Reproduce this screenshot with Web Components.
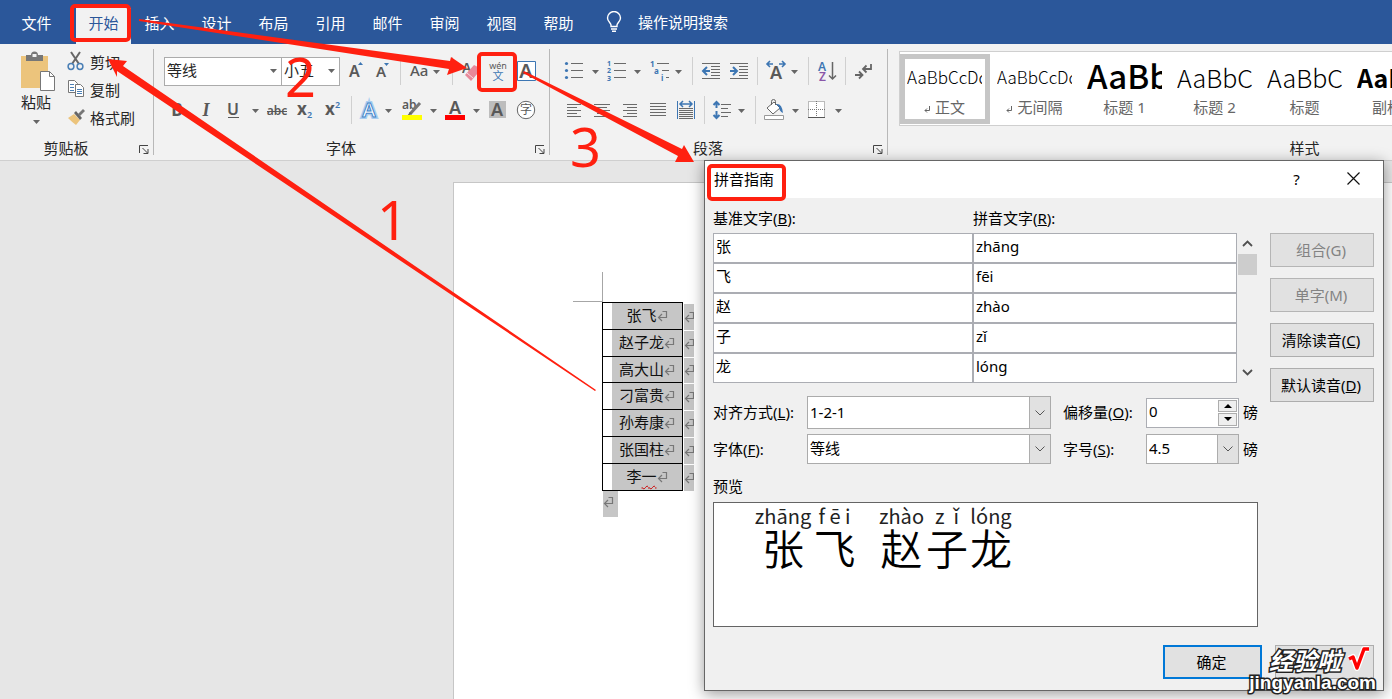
<!DOCTYPE html>
<html lang="zh-CN">
<head>
<meta charset="utf-8">
<title>拼音指南</title>
<style>
html, body { margin: 0; height: 100%; }
body { overflow: hidden; font-family: "Noto Sans", "Noto Sans CJK SC", sans-serif; font-size: 15px; color: #262626; }
</style>
</head>
<body>
<word-app>
  <menu-bar slot="menu"></menu-bar>
  <ribbon-bar slot="ribbon">
    <ribbon-group label="剪贴板" launcher style="width:154px"><clipboard-tools></clipboard-tools></ribbon-group>
    <ribbon-group label="字体" launcher style="width:396px"><font-tools></font-tools></ribbon-group>
    <ribbon-group label="段落" launcher style="width:338px"><paragraph-tools></paragraph-tools></ribbon-group>
    <ribbon-group label="样式" style="width:834px"><style-gallery></style-gallery></ribbon-group>
  </ribbon-bar>
  <doc-page slot="document"><name-table></name-table></doc-page>
  <pinyin-dialog slot="overlay"></pinyin-dialog>
  <mark-layer slot="overlay"></mark-layer>
  <site-badge slot="overlay"></site-badge>
</word-app>

<script>
const component = (name, html, ready) => {
  const template = document.createElement('template');
  template.innerHTML = html;
  customElements.define(name, class extends HTMLElement {
    constructor() {
      super();
      this.attachShadow({ mode: 'open' }).append(template.content.cloneNode(true));
    }
    connectedCallback() { if (ready) ready(this, this.shadowRoot); }
  });
};

const tool = (label, w, art) =>
  `<tool-button label="${label}" style="width:${w}px"><svg width="${w}" height="30" viewBox="0 0 ${w} 30">${art}</svg></tool-button>`;
const more = label => tool(label + '选项', 12, '<path d="M3 14h7l-3.500 4z" fill="#666"/>');
const sep = w => `<tool-sep style="width:${w}px"></tool-sep>`;
const lines = (list, extra = '') => `<path d="${list.map(([a, b, y]) => `M${a} ${y}.5H${b}`).join('')}" stroke="#6a6a6a" ${extra}/>`;
const returnMark = `<svg class="mark" width="11" height="12" viewBox="0 0 11 12" fill="none" stroke="#777" stroke-width="1.200"><path d="M5.500 1.500H9.500V7.500H1.500M5 4L1.500 7.500L5 11"/></svg>`;

component('word-app', `
<style>
:host { display: flex; flex-direction: column; min-height: 100vh; position: relative; background: #e6e6e6; }
.document { flex: 1; display: flex; min-height: 0; }
</style>
<slot name="menu"></slot><slot name="ribbon"></slot>
<main class="document"><slot name="document"></slot></main>
<slot name="overlay"></slot>`);

component('menu-bar', `
<style>
:host { display: block; background: #2b579a; height: 44px; }
nav { display: flex; height: 44px; padding-left: 8px; }
a { width: 57px; line-height: 46px; text-align: center; color: #fff; text-decoration: none; }
a.file { margin-right: 11px; }
a.on { width: 55px; margin-top: 8px; line-height: 30px; background: #f2f2f2; color: #2b579a; }
a.tell { width: auto; display: flex; gap: 16px; align-items: center; margin-left: 19px; line-height: 48px; }
</style>
<nav aria-label="功能区">
<a class="file" href="#file">文件</a><a class="on" href="#home">开始</a><a href="#insert">插入</a><a href="#design">设计</a><a href="#layout">布局</a><a href="#ref">引用</a><a href="#mail">邮件</a><a href="#review">审阅</a><a href="#view">视图</a><a href="#help">帮助</a>
<a class="tell" href="#tell"><svg width="16" height="22" viewBox="0 0 16 22" fill="none" stroke="#fff" stroke-width="1.400"><path d="M5 15.500V14C5 12 1.500 10.500 1.500 7A6.500 6.500 0 0 1 14.500 7C14.500 10.500 11 12 11 14V15.500ZM5 18h6M6 20.300h4"/></svg><span>操作说明搜索</span></a>
</nav>`);

component('ribbon-bar', `
<style>
:host { display: flex; box-sizing: border-box; height: 117px; padding: 5px 0; background: #f2f2f2; border-bottom: 1px solid #cfcfcf; overflow: hidden; }
</style><slot></slot>`);

component('ribbon-group', `
<style>
:host { display: flex; flex-direction: column; flex: none; box-sizing: border-box; border-right: 1px solid #b8b8b8; }
.body { flex: 1; }
footer { display: flex; align-items: center; height: 14px; line-height: 14px; }
.label { flex: 1; text-align: center; }
button { width: 21px; height: 14px; padding: 0; border: 0; background: none; display: none; }
:host([launcher]) button { display: block; }
svg { display: block; margin-left: 7px; }
</style>
<div class="body"><slot></slot></div>
<footer><span class="label"></span><button><svg width="10" height="14" viewBox="0 0 10 14" fill="none" stroke="#444"><path d="M.5 12V4.500H9M3.500 7L8.500 12M9 8v4.500H4.500"/></svg></button></footer>`,
(host, root) => {
  root.querySelector('.label').textContent = host.getAttribute('label');
  root.querySelector('button').setAttribute('aria-label', host.getAttribute('label') + '设置');
});

component('tool-button', `
<style>
:host { display: block; flex: none; }
button { display: block; width: 100%; padding: 0; border: 0; background: none; font: inherit; }
::slotted(svg) { display: block; }
</style><button><slot></slot></button>`,
(host, root) => root.querySelector('button').setAttribute('aria-label', host.getAttribute('label')));

component('tool-sep', `
<style>
:host { display: flex; justify-content: center; flex: none; height: 28px; }
i { width: 1px; background: #d0d0d0; }
</style><i></i>`);

component('clipboard-tools', `
<style>
:host { display: flex; gap: 3px; padding-left: 8px; }
button { border: 0; padding: 0; background: none; font: inherit; color: inherit; }
svg { display: block; }
.paste { width: 56px; display: flex; flex-direction: column; align-items: center; padding-top: 2px; }
.paste .board { align-self: end; margin-right: 8px; }
.paste span { line-height: 20px; }
.small { display: flex; flex-direction: column; gap: 4px; }
.small button { display: flex; align-items: center; gap: 5px; height: 24px; }
</style>
<button class="paste">
<svg class="board" width="36" height="41" viewBox="0 0 36 41"><path d="M1 5h27v32H1z" fill="#ecc47c"/><path d="M6 4h5a3 3 0 0 1 7 0h5v6H6z" fill="#777"/><path d="M12.500 3h4v3h-4z" fill="#f2f2f2"/><path d="M20.500 20.500h9l5 5v14h-14z" fill="#fff" stroke="#777"/><path d="M29.500 20.500v5h5" fill="none" stroke="#777"/></svg>
<span>粘贴</span>
<svg width="8" height="18" viewBox="0 0 8 18"><path d="M1 8h7l-3.500 4z" fill="#666"/></svg>
</button>
<div class="small">
<button><svg width="18" height="20" viewBox="0 0 18 20" fill="none"><path d="M4 1L12 13M13 1L5 13" stroke="#666" stroke-width="2"/><circle cx="4" cy="15.500" r="2.900" stroke="#4a7fb5" stroke-width="1.500"/><circle cx="13" cy="15.500" r="2.900" stroke="#4a7fb5" stroke-width="1.500"/></svg>剪切</button>
<button><svg width="18" height="20" viewBox="0 0 18 20" fill="#fff" stroke="#777"><path d="M1.500 1.500h6l3 3v9h-9z"/><path d="M8.500 5.500h5l3 3v9h-8z"/><path d="M3 5.500h4M3 8.500h4M3 11.500h4M10 10.500h5M10 12.500h5M10 14.500h5" stroke="#4a7fb5"/></svg>复制</button>
<button><svg width="18" height="20" viewBox="0 0 18 20"><path d="M1 11L7 7L13 13L9 18Q5 15 1 11z" fill="#ecc47c"/><path d="M7 6L9 4L15 11L13 13z" fill="#666"/><path d="M11 7L16 2L18 4L13 9z" fill="#777"/></svg>格式刷</button>
</div>`);

component('drop-down', `
<style>
:host { display: grid; box-sizing: border-box; background: #fff; border: 1px solid #ababab; }
select, .arrow { grid-area: 1 / 1; }
select { appearance: none; width: 100%; height: 100%; margin: 0; border: 0; padding: 0 0 2px 2px; background: none; font: inherit; color: inherit; outline: 0; }
.arrow { justify-self: end; display: flex; align-items: center; justify-content: center; width: 16px; pointer-events: none; }
.flat { display: block; } .chev { display: none; }
:host([boxed]) .arrow { width: 20px; background: #e1e1e1; border-left: 1px solid #adadad; }
:host([boxed]) .flat { display: none; } :host([boxed]) .chev { display: block; }
</style>
<select><option></option></select>
<span class="arrow"><svg class="flat" width="7" height="4"><path d="M0 0h7l-3.500 4z" fill="#666"/></svg><svg class="chev" width="10" height="6" fill="none" stroke="#555"><path d="M.5 .5L5 5L9.500 .5"/></svg></span>`,
(host, root) => {
  root.querySelector('option').textContent = host.getAttribute('value');
  root.querySelector('select').setAttribute('aria-label', host.getAttribute('label'));
});

const rowStyle = `
:host { display: flex; flex-direction: column; gap: 9px; padding-top: 7px; }
.row { display: flex; height: 30px; align-items: center; }
text { font-family: "Noto Sans", "Noto Sans CJK SC", sans-serif; fill: #595959; }
.b { font-weight: 600; } .mid { text-anchor: middle; } .blue { fill: #3d76b3; }`;

component('font-tools', `
<style>${rowStyle}
:host { padding-left: 10px; }
drop-down { height: 29px; }
.face { width: 118px; margin-right: -1px; } .size { width: 59px; }
</style>
<div class="row"><drop-down class="face" label="字体" value="等线"></drop-down><drop-down class="size" label="字号" value="小五"></drop-down>${
tool('增大字号', 30, '<text x="9" y="21" font-size="16" class="b">A</text><path d="M18 9h5l-2.500-3z" fill="#3d76b3"/>') +
tool('减小字号', 26, '<text x="6" y="21" font-size="15" class="b">A</text><path d="M14 7h5l-2.500 3z" fill="#3d76b3"/>') +
sep(8) +
tool('更改大小写', 26, '<text x="6" y="20" font-size="15" font-weight="500">Aa</text>') + more('更改大小写') + sep(20) +
tool('清除格式', 22, '<text x="0" y="17" font-size="14" class="b">A</text><path d="M3 19L12 9L16 11V17L9 25z" fill="#e8899a"/><path d="M5 17l6 5" stroke="#f7dbe0"/>') +
tool('拼音指南', 28, '<text x="14" y="13" font-size="9" class="mid">wén</text><text x="14" y="24" font-size="11" class="mid blue">文</text>') +
tool('字符边框', 28, '<path d="M5.500 5.500h18v19h-18z" fill="#fff" stroke="#3d76b3"/><text x="14" y="22" font-size="20" class="mid b">A</text>')}</div>
<div class="row">${
tool('加粗', 28, '<text x="13" y="21" font-size="17" font-weight="700" class="mid">B</text>') +
tool('倾斜', 28, '<text x="14" y="21" font-size="18" font-weight="700" font-style="italic" class="mid" style="font-family:\'Liberation Serif\',serif">I</text>') +
tool('下划线', 26, '<text x="13" y="20" font-size="16" class="mid b">U</text><path d="M8 22.500h11" stroke="#595959"/>') +
tool('下划线选项', 16, '<path d="M6 14h7l-3.500 4z" fill="#666"/>') +
tool('删除线', 30, '<text x="15" y="20" font-size="12" class="mid b">abc</text><path d="M5 16.500h20" stroke="#595959"/>') +
tool('下标', 26, '<text x="5" y="20" font-size="17" font-weight="700">x</text><text x="15" y="23" font-size="9" class="blue b">2</text>') +
tool('上标', 28, '<text x="7" y="20" font-size="17" font-weight="700">x</text><text x="17" y="13" font-size="9" class="blue b">2</text>') +
sep(10) +
tool('文本效果', 26, '<text x="13" y="22" font-size="20" class="mid b" style="fill:#fff;stroke:#a9cdf0;stroke-width:4;paint-order:stroke">A</text><text x="13" y="22" font-size="20" class="mid b" style="fill:#fff;stroke:#3f83c8;stroke-width:1">A</text>') + more('文本效果') +
tool('突出显示', 33, '<text x="8" y="14" font-size="12" class="b">ab</text><path d="M26 8L16 19" stroke="#777" stroke-width="3"/><path d="M16 17l-3 4l5-2z" fill="#666"/><path d="M8 20h20v5H8z" fill="#ff0"/>') + more('突出显示') +
tool('字体颜色', 31, '<text x="16" y="19" font-size="18" class="mid b">A</text><path d="M6 20h20v5H6z" fill="#f00"/>') + more('字体颜色') +
tool('字符底纹', 30, '<path d="M7 6h17v17H7z" fill="#bdbdbd"/><text x="15" y="21" font-size="18" class="mid b">A</text>') +
tool('带圈字符', 28, '<circle cx="14" cy="15" r="8.700" fill="#fff" stroke="#666"/><text x="14" y="19" font-size="12" class="mid">字</text>')}</div>`);

component('paragraph-tools', `
<style>${rowStyle}
:host { padding-left: 10px; }
svg { fill: none; }
</style>
<div class="row">${
tool('项目符号', 29, '<g fill="#3d76b3"><circle cx="6.500" cy="7.500" r="1.600"/><circle cx="6.500" cy="14.500" r="1.600"/><circle cx="6.500" cy="21.500" r="1.600"/></g>' + lines([[11, 23, 7], [11, 23, 14], [11, 23, 21]])) + more('项目符号') +
tool('编号', 30, '<g font-size="7" font-weight="700"><text class="blue" x="6" y="10">1</text><text class="blue" x="6" y="17">2</text><text class="blue" x="6" y="25">3</text></g>' + lines([[13, 25, 7], [13, 25, 14], [13, 25, 21]])) + more('编号') +
tool('多级列表', 29, '<g font-size="8" font-weight="700"><text class="blue" x="7" y="11">1</text><text class="blue" x="11" y="18">a</text><text class="blue" x="18" y="25">i</text></g>' + lines([[14, 26, 7], [19, 26, 14], [23, 26, 21]])) + more('多级列表') +
sep(16) +
tool('减少缩进', 25, lines([[2, 20, 7], [11, 20, 10], [11, 20, 13], [11, 20, 16], [11, 20, 19], [2, 20, 22]]) + '<path d="M10 15H4M7 11L3 15L7 19" stroke="#3d76b3" stroke-width="2"/>') +
tool('增加缩进', 25, lines([[5, 23, 7], [14, 23, 10], [14, 23, 13], [14, 23, 16], [14, 23, 19], [5, 23, 22]]) + '<path d="M5 15h6M8 11L12 15L8 19" stroke="#3d76b3" stroke-width="2"/>') +
sep(14) +
tool('中文版式', 24, '<text x="12" y="23" font-size="18" class="mid b">A</text><path d="M9 8H4M6 5L3 8L6 11M15 8h5M18 5L21 8L18 11" stroke="#3d76b3" stroke-width="1.600"/>') + more('中文版式') +
sep(16) +
tool('排序', 22, '<text x="2" y="15" font-size="12" class="b blue">A</text><text x="3" y="25" font-size="12" class="b" style="fill:#8a56a8">Z</text><path d="M16.500 6V23M13 19.500L16.500 23L20 19.500" stroke="#666" stroke-width="1.500"/>') +
sep(14) +
tool('显示编辑标记', 24, '<path d="M19 8V13H12M14.500 9.500L11 13L14.500 16.500M3 19h7M7 15.500L10.500 19L7 22.500" stroke="#666" stroke-width="1.800"/>')}</div>
<div class="row">${
tool('左对齐', 28, lines([[7, 21, 9], [7, 17, 12], [7, 21, 15], [7, 17, 18], [7, 21, 21]])) +
tool('居中', 28, lines([[6, 22, 9], [9, 19, 12], [6, 22, 15], [9, 19, 18], [6, 22, 21]])) +
tool('右对齐', 28, lines([[7, 21, 9], [11, 21, 12], [7, 21, 15], [11, 21, 18], [7, 21, 21]])) +
tool('两端对齐', 28, lines([[6, 22, 8], [6, 22, 11], [6, 22, 14], [6, 22, 17], [6, 22, 20]])) +
tool('分散对齐', 28, '<path d="M5.500 6V24M22.500 6V24" stroke="#3d76b3"/><path d="M9 9h10M11 6L8 9L11 12M17 6L20 9L17 12" stroke="#3d76b3" stroke-width="1.500"/>' + lines([[7, 21, 13], [7, 21, 15], [7, 21, 17], [7, 21, 19], [7, 21, 21], [7, 21, 23]])) +
sep(8) +
tool('行距', 27, '<path d="M8.500 7V13M5.500 10L8.500 7L11.500 10M8.500 16V23M5.500 20L8.500 23L11.500 20" stroke="#3d76b3" stroke-width="2"/>' + lines([[13, 23, 9], [13, 20, 13], [13, 23, 17], [13, 20, 21]])) + more('行距') +
sep(16) +
tool('底纹', 26, '<path d="M4 13L11 7L17 13L10 19Z" fill="#fff" stroke="#666"/><path d="M8.500 10V6.500a2 2 0 0 1 4 0V10" stroke="#666"/><path d="M13 9Q19 8 20 18Q16 16 16 12Z" fill="#3d76b3"/><path d="M1.500 20.500h19v4h-19z" fill="#fff" stroke="#999"/>') + more('底纹') +
tool('边框', 31, '<path d="M7 6h17v17H7z" fill="#fff"/><path d="M7.500 6.500h16v16h-16zM15.500 6v17M7 14.500h17" stroke="#777" stroke-dasharray="1 1"/><path d="M7 22.500h17" stroke="#555"/>') + more('边框')}</div>`);

component('style-card', `
<style>
:host { display: block; flex: none; box-sizing: border-box; width: 90px; height: 70px; border: 5px solid transparent; }
:host([selected]) { border-color: #c6c6c6; }
button { display: block; width: 80px; height: 60px; padding: 0 3px 0 2px; border: 0; background: none; font: inherit; overflow: hidden; }
.sample { height: 38px; line-height: 36px; overflow: hidden; white-space: nowrap; text-align: left; color: #000; font-family: "Noto Sans CJK SC", sans-serif; font-weight: 300; font-size: 17px; }
.sample.mid { font-size: 25px; } .sample.big { font-size: 33px; font-weight: 500; line-height: 32px; } .sample.bold { font-size: 25px; font-weight: 700; }
.name { line-height: 20px; height: 22px; white-space: nowrap; color: #666; font-size: 15px; }
.name svg { display: none; margin-right: 4px; }
:host([para]) .name svg { display: inline-block; }
</style>
<button><div class="sample"></div><div class="name"><svg width="7" height="7" viewBox="0 0 7 7" fill="none" stroke="#666"><path d="M5.500 0V4.500H1M3 2.500L1 4.500L3 6.500"/></svg><span></span></div></button>`,
(host, root) => {
  const sample = root.querySelector('.sample');
  sample.textContent = host.getAttribute('sample');
  if (host.hasAttribute('size')) sample.classList.add(host.getAttribute('size'));
  root.querySelector('.name span').textContent = host.getAttribute('name');
});

component('style-gallery', `
<style>
:host { display: block; padding: 2px 0 0 11px; }
.box { display: flex; height: 73px; border: 1px solid #cfcfcf; background: #fff; align-items: center; overflow: hidden; }
</style>
<div class="box">
<style-card selected para name="正文" sample="AaBbCcDd"></style-card>
<style-card para name="无间隔" sample="AaBbCcDd"></style-card>
<style-card size="big" name="标题 1" sample="AaBb"></style-card>
<style-card size="mid" name="标题 2" sample="AaBbC"></style-card>
<style-card size="mid" name="标题" sample="AaBbC"></style-card>
<style-card size="bold" name="副标题" sample="AaBbC"></style-card>
</div>`);

component('doc-page', `
<style>
:host { display: block; flex: 1; margin: 21px 0 0 453px; padding: 89px 0 0 119px; background: #fff; border: 1px solid #c6c6c6; border-width: 1px 0 0 1px; }
.corner { width: 29px; height: 29px; border: 1px solid #a6a6a6; border-width: 0 1px 1px 0; }
.text { margin-left: 29px; }
.end { display: block; width: 15px; height: 26px; margin-left: 1px; background: #c6c6c6; }
.end svg { display: block; padding-top: 5px; }
</style>
<div class="corner"></div>
<div class="text"><slot></slot><span class="end">${returnMark}</span></div>`);

component('name-table', `
<style>
:host { display: block; }
table { border-collapse: collapse; color: #111; }
td { padding: 0; height: 26px; }
.name { width: 80px; box-sizing: border-box; border: 1px solid #000; padding-left: 9px; }
.name div { height: 26px; line-height: 24px; background: #c6c6c6; text-align: center; white-space: nowrap; }
tr:nth-child(3) td, tr:nth-child(3) div { height: 25px; }
.tail { padding: 1px 0 0 1px; }
.tail div { display: flex; align-items: center; width: 10px; height: 26px; background: #c6c6c6; overflow: hidden; }
.mark { flex: none; }
.name .mark { vertical-align: -1px; }
u { text-decoration: underline wavy #c00 1px; text-underline-offset: 3px; }
</style>
<table><tbody>${['张飞', '赵子龙', '高大山', '刁富贵', '孙寿康', '张国柱', '李<u>一</u>'].map(n =>
`<tr><td class="name"><div>${n}${returnMark}</div></td><td class="tail"><div>${returnMark}</div></td></tr>`).join('')}</tbody></table>`);

component('dialog-button', `
<style>
:host { display: block; height: 34px; }
button { width: 100%; height: 100%; box-sizing: border-box; padding: 0 2px 2px 0; border: 1px solid #adadad; background: #e1e1e1; font: inherit; color: #000; }
button:disabled { color: #838383; border-color: #b5b5b5; }
:host([primary]) button { border: 2px solid #0078d7; }
</style><button><slot></slot></button>`,
(host, root) => {
  const button = root.querySelector('button');
  button.disabled = host.hasAttribute('disabled');
  if (host.hasAttribute('label')) button.setAttribute('aria-label', host.getAttribute('label'));
});

component('ruby-preview', `
<style>
:host { display: flex; box-sizing: border-box; height: 125px; padding: 2px 0 0 40px; border: 1px solid #646464; background: #fff; color: #000; }
.unit { display: flex; flex-direction: column; align-items: center; white-space: pre; font-family: "Noto Sans CJK SC", sans-serif; }
.py { font-size: 20px; line-height: 22px; height: 22px; color: #222; }
.han { font-size: 42px; line-height: 40px; font-weight: 350; }
</style>
${[['zhāng', '张', 58], ['f ē i', '飞', 45], ['', ' ', 21], ['zhào', '赵', 47], ['z  ǐ', '子', 44], ['lóng', '龙', 44]].map(([p, h, w]) =>
`<span class="unit" style="width:${w}px"><span class="py">${p}</span><span class="han">${h}</span></span>`).join('')}`);

component('pinyin-dialog', `
<style>
:host { display: block; position: absolute; left: 704px; top: 160px; box-sizing: border-box; width: 680px; border: 1px solid #666; background: #f0f0f0; box-shadow: 0 3px 14px rgba(0,0,0,.4); color: #000; }
header { display: flex; align-items: center; height: 37px; padding: 0 1px 0 9px; background: #fff; }
h1 { flex: 1; margin: 0; padding-bottom: 2px; font-size: 15px; font-weight: 400; }
header button { width: 57px; height: 36px; padding: 0 0 2px; border: 0; background: none; font: inherit; }
header button svg { display: block; margin: auto; }
.body { display: grid; grid-template-columns: 1fr 104px; column-gap: 12px; padding: 10px 9px 0 8px; }
.heads, .pairs { display: grid; grid-template-columns: 260px 264px; }
.heads { line-height: 20px; height: 25px; }
.list { display: flex; }
.pairs input { box-sizing: border-box; width: 100%; height: 30px; margin: 0; border: 1px solid #abadb3; border-radius: 0; padding: 0 2px 5px; font: inherit; color: #000; background: #fff; }
.scroll { flex: 1; display: flex; flex-direction: column; align-items: center; }
.scroll svg { padding: 7px 0; }
.thumb { width: 19px; height: 21px; background: #cdcdcd; margin-bottom: auto; }
.side { display: grid; gap: 11px; align-content: start; padding-top: 25px; }
.form { display: grid; grid-template-columns: 94px 244px 12px 83px 93px 1fr; row-gap: 5px; align-items: center; margin-top: 13px; }
.form label, .unit { white-space: nowrap; padding-bottom: 2px; }
.align { height: 33px; }
.face, .size { height: 30px; }
.unit { padding-left: 4px; }
.spin { display: flex; box-sizing: border-box; height: 30px; border: 1px solid #abadb3; background: #fff; }
.spin input { flex: 1; width: 0; border: 0; padding: 0 2px 4px; font: inherit; background: none; }
.steps { display: flex; flex-direction: column; gap: 1px; padding: 1px; }
.steps button { display: block; width: 19px; height: 13px; padding: 0; border: 1px solid #adadad; background: #efefef; }
.steps svg { display: block; margin: auto; }
.cap { line-height: 20px; margin: 12px 0 6px; }
.actions { display: flex; justify-content: flex-end; gap: 13px; padding: 18px 9px 11px; }
.actions dialog-button { width: 99px; }
</style>
<header><h1>拼音指南</h1><button aria-label="帮助">?</button><button aria-label="关闭"><svg width="13" height="13" stroke="#111" stroke-width="1.200"><path d="M.5 .5L12.500 12.500M12.500 .5L.5 12.500"/></svg></button></header>
<div class="body">
<div>
<div class="heads"><label for="b0">基准文字(<u>B</u>):</label><label for="p0">拼音文字(<u>R</u>):</label></div>
<div class="list"><div class="pairs">${[['张', 'zhāng'], ['飞', 'fēi'], ['赵', 'zhào'], ['子', 'zǐ'], ['龙', 'lóng']].map(([b, p], i) =>
`<input id="b${i}" aria-label="基准文字 ${i + 1}" value="${b}"><input id="p${i}" aria-label="拼音文字 ${i + 1}" value="${p}">`).join('')}</div>
<div class="scroll"><svg width="11" height="7" viewBox="0 0 11 7" fill="none" stroke="#505050" stroke-width="1.800"><path d="M1 6L5.500 1.500L10 6"/></svg><div class="thumb"></div><svg width="11" height="7" viewBox="0 0 11 7" fill="none" stroke="#505050" stroke-width="1.800"><path d="M1 1L5.500 5.500L10 1"/></svg></div></div>
<div class="form">
<label>对齐方式(<u>L</u>):</label><drop-down boxed class="align" label="对齐方式" value="1-2-1"></drop-down><span></span><label for="off">偏移量(<u>O</u>):</label><div class="spin"><input id="off" value="0"><span class="steps"><button aria-label="增加"><svg width="8" height="4"><path d="M0 4h8L4 0z"/></svg></button><button aria-label="减少"><svg width="8" height="4"><path d="M0 0h8L4 4z"/></svg></button></span></div><span class="unit">磅</span>
<label>字体(<u>F</u>):</label><drop-down boxed class="face" label="字体" value="等线"></drop-down><span></span><label>字号(<u>S</u>):</label><drop-down boxed class="size" label="字号" value="4.5"></drop-down><span class="unit">磅</span>
</div>
<div class="cap">预览</div>
<ruby-preview></ruby-preview>
</div>
<div class="side"><dialog-button disabled>组合(G)</dialog-button><dialog-button disabled>单字(M)</dialog-button><dialog-button>清除读音(<u>C</u>)</dialog-button><dialog-button>默认读音(<u>D</u>)</dialog-button></div>
</div>
<div class="actions"><dialog-button primary>确定</dialog-button><dialog-button label="取消"></dialog-button></div>`);

component('mark-layer', `
<style>
:host { display: block; position: absolute; left: 0; top: 0; pointer-events: none; }
svg { display: block; }
text { font-family: "Noto Sans", sans-serif; font-size: 54px; }
</style>
<svg width="800" height="420" viewBox="0 0 800 420" fill="#ff2010">
<g fill="none" stroke="#ff2010" stroke-width="4"><rect x="72" y="6" width="57" height="34" rx="3"/><rect x="479" y="54" width="36" height="36" rx="3"/><rect x="709" y="166" width="75" height="33" rx="3"/></g>
<path d="M108 59L127 61L123 66L596 390L595 391L117 71L117 77Z"/>
<path d="M139 19L450 61L451 57L467 68L447 75L449 69L139 21Z"/>
<path d="M524 71L682 149L684 145L694 162L675 162L678 156L523 73Z"/>
<text x="377" y="240">1</text><text x="285" y="97">2</text><text x="570" y="167">3</text>
</svg>`);

component('site-badge', `
<style>
:host { display: flex; flex-direction: column; align-items: flex-end; position: absolute; left: 1240px; top: 645px; width: 136px; pointer-events: none; color: #fff; }
span { white-space: nowrap; -webkit-text-stroke: 3px #222; paint-order: stroke fill; font-weight: 700; }
.top { display: flex; gap: 5px; padding-right: 5px; }
.cn { font-family: "Noto Sans CJK SC", sans-serif; font-size: 24px; line-height: 29px; font-style: italic; }
.url { font-family: "Liberation Sans", sans-serif; font-size: 19px; line-height: 18px; }
</style>
<div class="top"><span class="cn">经验啦</span><svg width="25" height="28" viewBox="0 0 25 28" fill="none" stroke-linejoin="round"><path d="M3 14L7 12L11 23L18 4H23" stroke="#fff" stroke-width="6"/><path d="M3 14L7 12L11 23L18 4H23" stroke="#f00" stroke-width="3.500"/></svg></div>
<span class="url">jingyanla.com</span>`);
</script>
</body>
</html>
